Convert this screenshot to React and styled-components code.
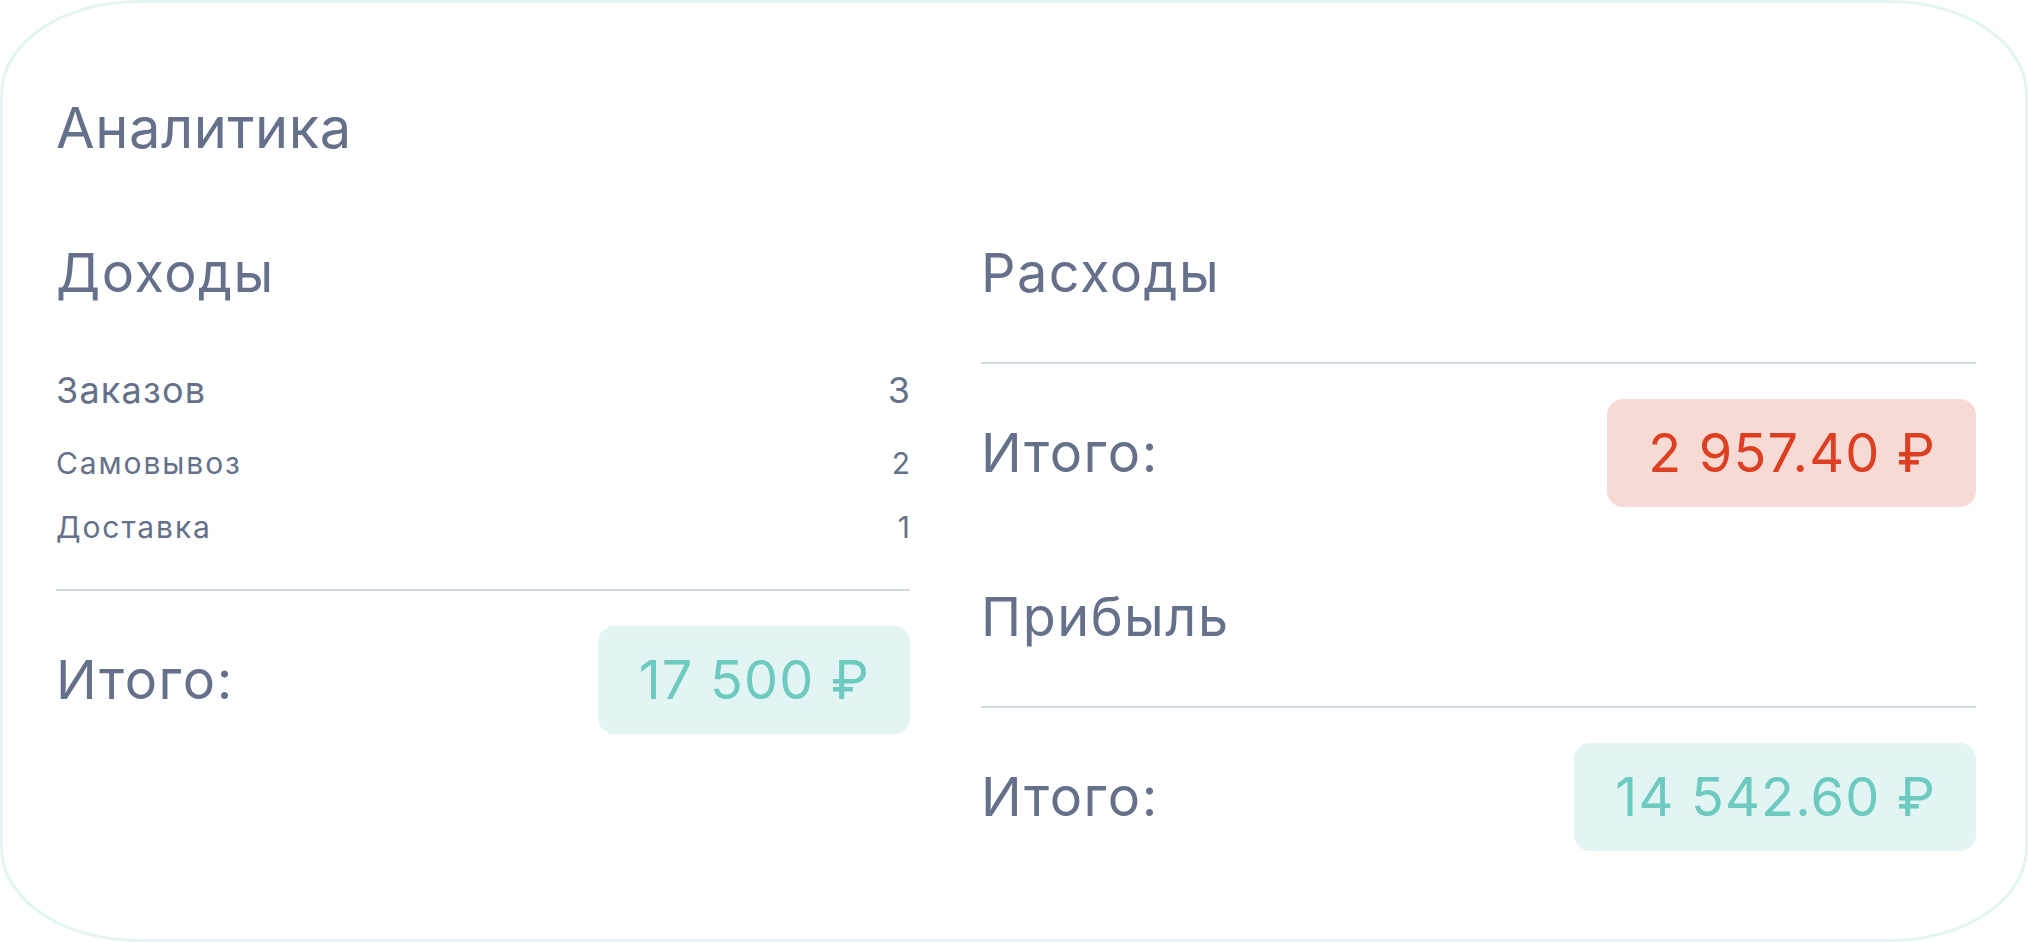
import React from "react";
import styled, { createGlobalStyle } from "styled-components";

const Global = createGlobalStyle`
  html, body { margin: 0; padding: 0; background: #ffffff; }
  body { font-family: Inter, "Noto Sans", sans-serif; color: #65718a; }
  * { box-sizing: border-box; }
`;

const Card = styled.section`
  width: 2028px;
  height: 942px;
  border: 3px solid #e2f4f3;
  border-radius: 138px / 94px;
  background: #ffffff;
  padding: 97px 49px 0 53px;
  display: flex;
  flex-direction: column;
`;

const Title = styled.h1`
  margin: 0;
  font-size: 56px;
  line-height: 56px;
  font-weight: 400;
  letter-spacing: 0.6px;
  color: #65718a;
`;

const Columns = styled.div`
  margin-top: 90px;
  display: grid;
  grid-template-columns: 854px 1fr;
  column-gap: 71px;
  align-items: start;
`;

const Column = styled.div`
  display: flex;
  flex-direction: column;
`;

const Heading = styled.h2`
  margin: ${(p) => p.$top || 0}px 0 0;
  font-size: 54px;
  line-height: 54px;
  font-weight: 400;
  letter-spacing: 1.5px;
  color: #65718a;
`;

const List = styled.div`
  margin-top: 72px;
  display: flex;
  flex-direction: column;
  gap: 34px;
`;

const Row = styled.div`
  display: flex;
  justify-content: space-between;
  align-items: baseline;
  font-size: ${(p) => (p.$large ? 36 : 30)}px;
  line-height: ${(p) => (p.$large ? 36 : 30)}px;
  letter-spacing: ${(p) => (p.$large ? 1.2 : 1.9)}px;
  margin-bottom: ${(p) => (p.$large ? 6 : 0)}px;
  color: #65718a;
`;

const Value = styled.span`
  letter-spacing: 0;
`;

const Divider = styled.hr`
  margin: ${(p) => p.$top}px 0 35px;
  border: 0;
  height: 2px;
  background: #d3dce3;
`;

const TotalRow = styled.div`
  display: flex;
  justify-content: space-between;
  align-items: center;
  height: 108px;
`;

const TotalLabel = styled.span`
  font-size: 54px;
  line-height: 54px;
  letter-spacing: 1.5px;
  color: #65718a;
`;

const Pill = styled.span`
  display: inline-flex;
  align-items: center;
  height: 108px;
  padding: 0 40px 0 41px;
  border-radius: 16px;
  font-size: 54px;
  line-height: 54px;
  letter-spacing: 1.2px;
  background: ${(p) => (p.$tone === "red" ? "#f7dad4" : "#e2f4f3")};
  color: ${(p) => (p.$tone === "red" ? "#dc3f22" : "#6ccac0")};
  white-space: nowrap;
`;

function Total({ value, tone }) {
  return (
    <TotalRow>
      <TotalLabel>Итого:</TotalLabel>
      <Pill $tone={tone}>{value}</Pill>
    </TotalRow>
  );
}

export default function App() {
  return (
    <>
      <Global />
      <Card>
        <Title>Аналитика</Title>
        <Columns>
          <Column>
            <Heading>Доходы</Heading>
            <List>
              <Row $large>
                <span>Заказов</span>
                <Value>3</Value>
              </Row>
              <Row>
                <span>Самовывоз</span>
                <Value>2</Value>
              </Row>
              <Row>
                <span>Доставка</span>
                <Value>1</Value>
              </Row>
            </List>
            <Divider $top={47} />
            <Total value="17 500 ₽" tone="green" />
          </Column>
          <Column>
            <Heading>Расходы</Heading>
            <Divider $top={62} />
            <Total value="2 957.40 ₽" tone="red" />
            <Heading $top={83}>Прибыль</Heading>
            <Divider $top={62} />
            <Total value="14 542.60 ₽" tone="green" />
          </Column>
        </Columns>
      </Card>
    </>
  );
}
